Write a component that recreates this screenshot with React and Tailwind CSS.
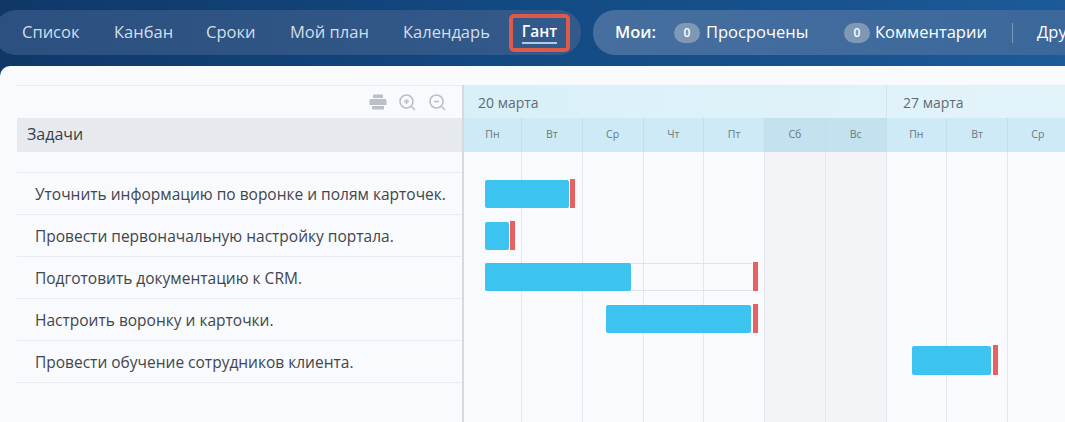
const tabs = [
  ["Список", "w-[92px]"],
  ["Канбан", "w-[92px]"],
  ["Сроки", "w-[84px]"],
  ["Мой план", "w-[113px]"],
  ["Календарь", "w-[106px]"],
];
const tasks = [
  "Уточнить информацию по воронке и полям карточек.",
  "Провести первоначальную настройку портала.",
  "Подготовить документацию к CRM.",
  "Настроить воронку и карточки.",
  "Провести обучение сотрудников клиента.",
];
const days = ["Пн", "Вт", "Ср", "Чт", "Пт", "Сб", "Вс", "Пн", "Вт", "Ср", ""];
const bars = [
  { top: 28, left: 21, width: 84, redTop: 27, red: 106, h: 28 },
  { top: 70, left: 21, width: 24, redTop: 69, red: 46, h: 28 },
  { top: 111, left: 21, width: 146, redTop: 110, red: 289, h: 28, ghost: 267 },
  { top: 153, left: 142, width: 145, redTop: 152, red: 289, h: 28 },
  { top: 194, left: 448, width: 79, redTop: 193, red: 529, h: 29 },
];

function Badge() {
  return (
    <span className="flex h-[20px] w-[26px] shrink-0 items-center justify-center rounded-full bg-[#7f98b5] text-[12px] font-semibold text-white">
      0
    </span>
  );
}

export default function App() {
  return (
    <div className="h-[422px] w-[1065px] overflow-hidden bg-[linear-gradient(90deg,#0f3868_0%,#134a83_50%,#1c5a99_100%)] font-['Open_Sans','Noto_Sans',sans-serif]">
      <header className="flex h-[66px] items-start whitespace-nowrap pt-[10px]">
        <nav className="ml-[-6px] flex h-[45px] w-[587px] shrink-0 items-center rounded-[22px] bg-[linear-gradient(90deg,#2c5080,#325a8a)] pl-[28px] text-[16.5px] text-[#d3deea]">
          {tabs.map(([t, w]) => (
            <span key={t} className={`${w} shrink-0`}>{t}</span>
          ))}
          <span className="flex h-[38px] w-[61px] shrink-0 flex-col items-center justify-center rounded-[5px] border-[4px] border-[#df5a4a] font-semibold text-white">
            <span className="text-[15.5px] leading-[20px]">Гант</span>
            <span className="mt-[1px] h-[2px] w-[35px] bg-[#b8c9e0]" />
          </span>
        </nav>
        <div className="ml-[12px] flex h-[45px] w-[520px] shrink-0 items-center rounded-l-[22px] bg-[linear-gradient(90deg,#466f9e,#3a679b)] pl-[22px] text-[16.5px] font-medium text-white">
          <span className="w-[59px] shrink-0 font-semibold">Мои:</span>
          <Badge />
          <span className="ml-[6px] w-[138px] shrink-0">Просрочены</span>
          <Badge />
          <span className="ml-[5px] w-[137px] shrink-0">Комментарии</span>
          <span className="mr-[24px] h-[20px] w-px shrink-0 bg-[#7f98b5]" />
          <span>Другие</span>
        </div>
      </header>

      <main className="flex h-[356px] rounded-tl-[10px] bg-[#f8fafd] pl-[17px] pt-[19px]">
        <section className="h-full w-[445px] shrink-0 border-t border-[#e8ebef]">
          <div className="flex h-[32px] items-center justify-end gap-[11px] pr-[15px] text-[#bac0c7]">
            <svg width="18" height="16" viewBox="0 0 18 16" fill="currentColor">
              <rect x="4" y="0.5" width="10" height="3.5" rx="0.5" />
              <path d="M2 5h14a1.5 1.5 0 0 1 1.5 1.5V11H.5V6.5A1.5 1.5 0 0 1 2 5Z" />
              <path d="M3 12h12v2.5a1 1 0 0 1-1 1H4a1 1 0 0 1-1-1Z" />
            </svg>
            <svg width="19" height="19" viewBox="0 0 19 19" fill="none" stroke="currentColor" strokeWidth="1.6">
              <circle cx="8.5" cy="8.5" r="6.5" />
              <path d="M13.5 13.5 17 17M6 8.5h5M8.5 6v5" />
            </svg>
            <svg width="19" height="19" viewBox="0 0 19 19" fill="none" stroke="currentColor" strokeWidth="1.6">
              <circle cx="8.5" cy="8.5" r="6.5" />
              <path d="M13.5 13.5 17 17M6 8.5h5" />
            </svg>
          </div>
          <div className="flex h-[34px] items-center bg-[#e6eaee] pb-[3px] pl-[10px] text-[16px] text-[#3a3f45]">Задачи</div>
          <div className="h-[21px] border-b border-[#e8ebef]" />
          {tasks.map((t) => (
            <div key={t} className="flex h-[42px] items-center border-b border-[#e8ebef] pl-[18px] pt-[3px] text-[15.5px] text-[#41464c]">
              {t}
            </div>
          ))}
        </section>

        <section className="relative h-full min-w-0 flex-1 border-l-2 border-[#d5dae0]">
          <div className="flex h-[33px] border-t border-[#e0eef6] bg-[linear-gradient(90deg,#d9f0f9,#e3f3fa)] text-[14px] text-[#5f6b74]">
            <div className="flex w-[422px] shrink-0 items-center pl-[14px]">20 марта</div>
            <div className="flex flex-1 items-center border-l border-[#d3e4ee] pl-[16px]">27 марта</div>
          </div>
          <div className="flex h-[34px]">
            {days.map((d, i) => (
              <div
                key={i}
                className={`flex h-full shrink-0 items-center justify-center border-r border-[#bfdfee] text-[10.5px] text-[#6b7780] ${
                  i === 0 ? "w-[58px]" : "w-[60.75px]"
                } ${i === 5 || i === 6 ? "bg-[#c4e1ef]" : "bg-[#cdeaf6]"}`}
              >
                {d}
              </div>
            ))}
          </div>
          <div className="relative flex h-[271px]">
            {days.map((d, i) => (
              <div
                key={i}
                className={`h-full shrink-0 border-r border-[#e4e7ec] ${
                  i === 0 ? "w-[58px]" : "w-[60.75px]"
                } ${i === 5 || i === 6 ? "bg-[#f2f4f7]" : ""}`}
              />
            ))}
            {bars.map((b, i) => (
              <div key={i}>
                {b.ghost && (
                  <div
                    className="absolute border-y border-[#dfe2e8]"
                    style={{ left: b.left, top: b.top, width: b.ghost, height: b.h }}
                  />
                )}
                <div
                  className="absolute rounded-[2px] bg-[#3cc3f0]"
                  style={{ left: b.left, top: b.top, width: b.width, height: b.h }}
                />
                <div
                  className="absolute w-[5px] bg-[#e8605f]"
                  style={{ left: b.red, top: b.redTop, height: b.h + 1 }}
                />
              </div>
            ))}
          </div>
        </section>
      </main>
    </div>
  );
}
